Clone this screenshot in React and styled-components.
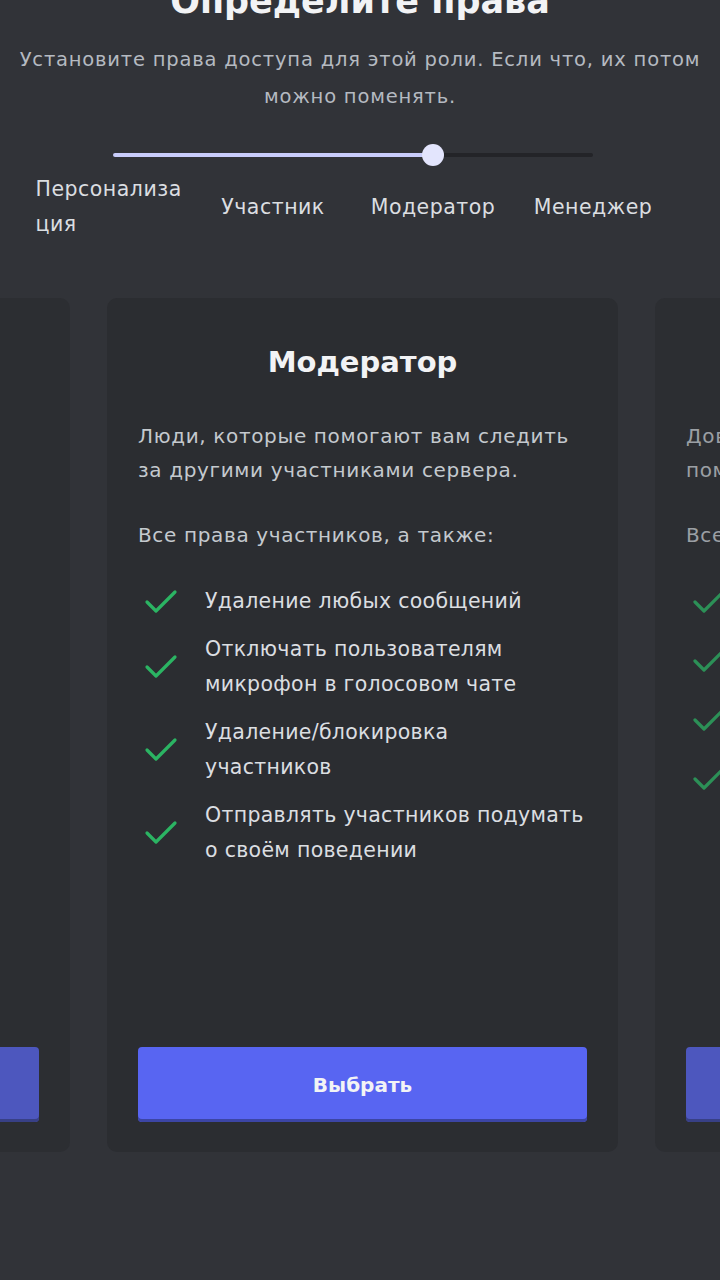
import React from 'react';
import styled, { createGlobalStyle } from 'styled-components';

const GlobalStyle = createGlobalStyle`
  html, body {
    margin: 0;
    padding: 0;
    background: #313338;
  }
  * { box-sizing: border-box; }
`

const Page = styled.div`
  width: 720px;
  height: 1280px;
  overflow: hidden;
  display: flex;
  flex-direction: column;
  align-items: center;
  background: #313338;
  font-family: "DejaVu Sans", "Noto Sans", sans-serif;
  color: #dbdee1;
`

const Title = styled.h1`
  margin: -21px 0 0;
  font-size: 35px;
  line-height: 44px;
  font-weight: 700;
  color: #f2f3f5;
  text-align: center;
`

const Subtitle = styled.p`
  margin: 18px 0 0;
  padding: 0 2px;
  font-size: 19.5px;
  line-height: 37px;
  color: #b5bac1;
  text-align: center;
  letter-spacing: 0.8px;
  white-space: nowrap;
`

const SliderWrap = styled.div`
  width: 640px;
  margin: 38px 0 0 -14px;
  display: flex;
  flex-direction: column;
`

const Track = styled.div`
  position: relative;
  margin: 0 80px;
  height: 4px;
  border-radius: 2px;
  background: #232428;
`

const Fill = styled.div`
  height: 100%;
  border-radius: 2px;
  background: #c9cdfb;
`

const Thumb = styled.div`
  position: absolute;
  top: 50%;
  width: 22px;
  height: 22px;
  border-radius: 50%;
  background: #e3e5fd;
  transform: translate(-50%, -50%);
`

const Stops = styled.div`
  display: grid;
  grid-template-columns: repeat(4, 160px);
  align-items: center;
  margin-top: 15px;
  min-height: 70px;
`

const StopLabel = styled.div`
  justify-self: center;
  max-width: 155px;
  font-size: 20.5px;
  line-height: 35px;
  letter-spacing: 0.5px;
  color: #dbdee1;
  overflow-wrap: anywhere;
  word-break: break-all;
  text-align: left;
`

const Carousel = styled.div`
  margin-top: 56px;
  display: flex;
  gap: 37px;
  justify-content: center;
  padding-left: 5px;
  width: 720px;
`

const Card = styled.div`
  flex-shrink: 0;
  width: 511px;
  height: 854px;
  border-radius: 10px;
  background: #2b2d31;
  padding: 44px 31px 30px;
  display: flex;
  flex-direction: column;
  opacity: ${p => (p.$dim ? 0.72 : 1)};
`

const CardTitle = styled.h2`
  margin: 0;
  font-size: 29px;
  line-height: 40px;
  font-weight: 700;
  color: #f2f3f5;
  text-align: center;
`

const Text = styled.p`
  margin: ${p => p.$top}px 0 0;
  font-size: 20px;
  line-height: 34px;
  color: #c4c9ce;
  letter-spacing: 0.65px;
`

const List = styled.ul`
  list-style: none;
  margin: 32px 0 0;
  padding: 0;
  display: flex;
  flex-direction: column;
  gap: ${p => p.$gap}px;
`

const Item = styled.li`
  display: flex;
  align-items: center;
  font-size: 20.5px;
  line-height: 35px;
  color: #dbdee1;
  letter-spacing: 0.3px;
`

const CheckBox = styled.span`
  flex-shrink: 0;
  width: 67px;
  display: flex;
  padding-left: 6px;
`

const ItemText = styled.span`
  white-space: pre;
`

const SelectButton = styled.button`
  margin-top: auto;
  height: 75px;
  border: none;
  border-radius: 4px;
  background: #5865f2;
  box-shadow: inset 0 -3px 0 #3c45a5;
  color: #f2f3f5;
  font-family: inherit;
  font-size: 20px;
  font-weight: 700;
`

const Check = () => (
  <svg width="34" height="26" viewBox="0 0 34 26">
    <path d="M3 13 L12 22 L31 3" fill="none" stroke="#2bb463" strokeWidth="3.2" strokeLinecap="round" strokeLinejoin="round" />
  </svg>
)

const roles = [
  {
    name: 'Участник',
    text: 'Обычные участники сервера.',
    sub: 'Права участников:',
    gap: 13,
    items: ['Просмотр каналов', 'Сообщения', 'Голосовые чаты'],
  },
  {
    name: 'Модератор',
    text: 'Люди, которые помогают вам следить за другими участниками сервера.',
    sub: 'Все права участников, а также:',
    gap: 13,
    items: [
      'Удаление любых сообщений',
      'Отключать пользователям\nмикрофон в голосовом чате',
      'Удаление/блокировка\nучастников',
      'Отправлять участников подумать\nо своём поведении',
    ],
  },
  {
    name: 'Менеджер',
    text: 'Доверенные участники, которые помогают вам управлять сервером.',
    sub: 'Все права модераторов, а также:',
    gap: 24,
    items: ['Каналы', 'Роли', 'Вебхуки', 'Эмодзи'],
  },
]

const stops = ['Персонализация', 'Участник', 'Модератор', 'Менеджер']

const RoleCard = ({ role, dim }) => (
  <Card $dim={dim}>
    <CardTitle>{role.name}</CardTitle>
    <Text $top={37}>{role.text}</Text>
    <Text $top={31}>{role.sub}</Text>
    <List $gap={role.gap}>
      {role.items.map(item => (
        <Item key={item}>
          <CheckBox><Check /></CheckBox>
          <ItemText>{item}</ItemText>
        </Item>
      ))}
    </List>
    <SelectButton>Выбрать</SelectButton>
  </Card>
)

const App = () => {
  const value = 2 / 3;
  return (
    <React.Fragment>
      <GlobalStyle />
      <Page>
        <Title>Определите права</Title>
        <Subtitle>
          Установите права доступа для этой роли. Если что, их потом<br />можно поменять.
        </Subtitle>
        <SliderWrap>
          <Track>
            <Fill style={{ width: `${value * 100}%` }} />
            <Thumb style={{ left: `${value * 100}%` }} />
          </Track>
          <Stops>
            {stops.map(s => <StopLabel key={s}>{s}</StopLabel>)}
          </Stops>
        </SliderWrap>
        <Carousel>
          <RoleCard role={roles[0]} dim />
          <RoleCard role={roles[1]} />
          <RoleCard role={roles[2]} dim />
        </Carousel>
      </Page>
    </React.Fragment>
  );
};

export default App;
